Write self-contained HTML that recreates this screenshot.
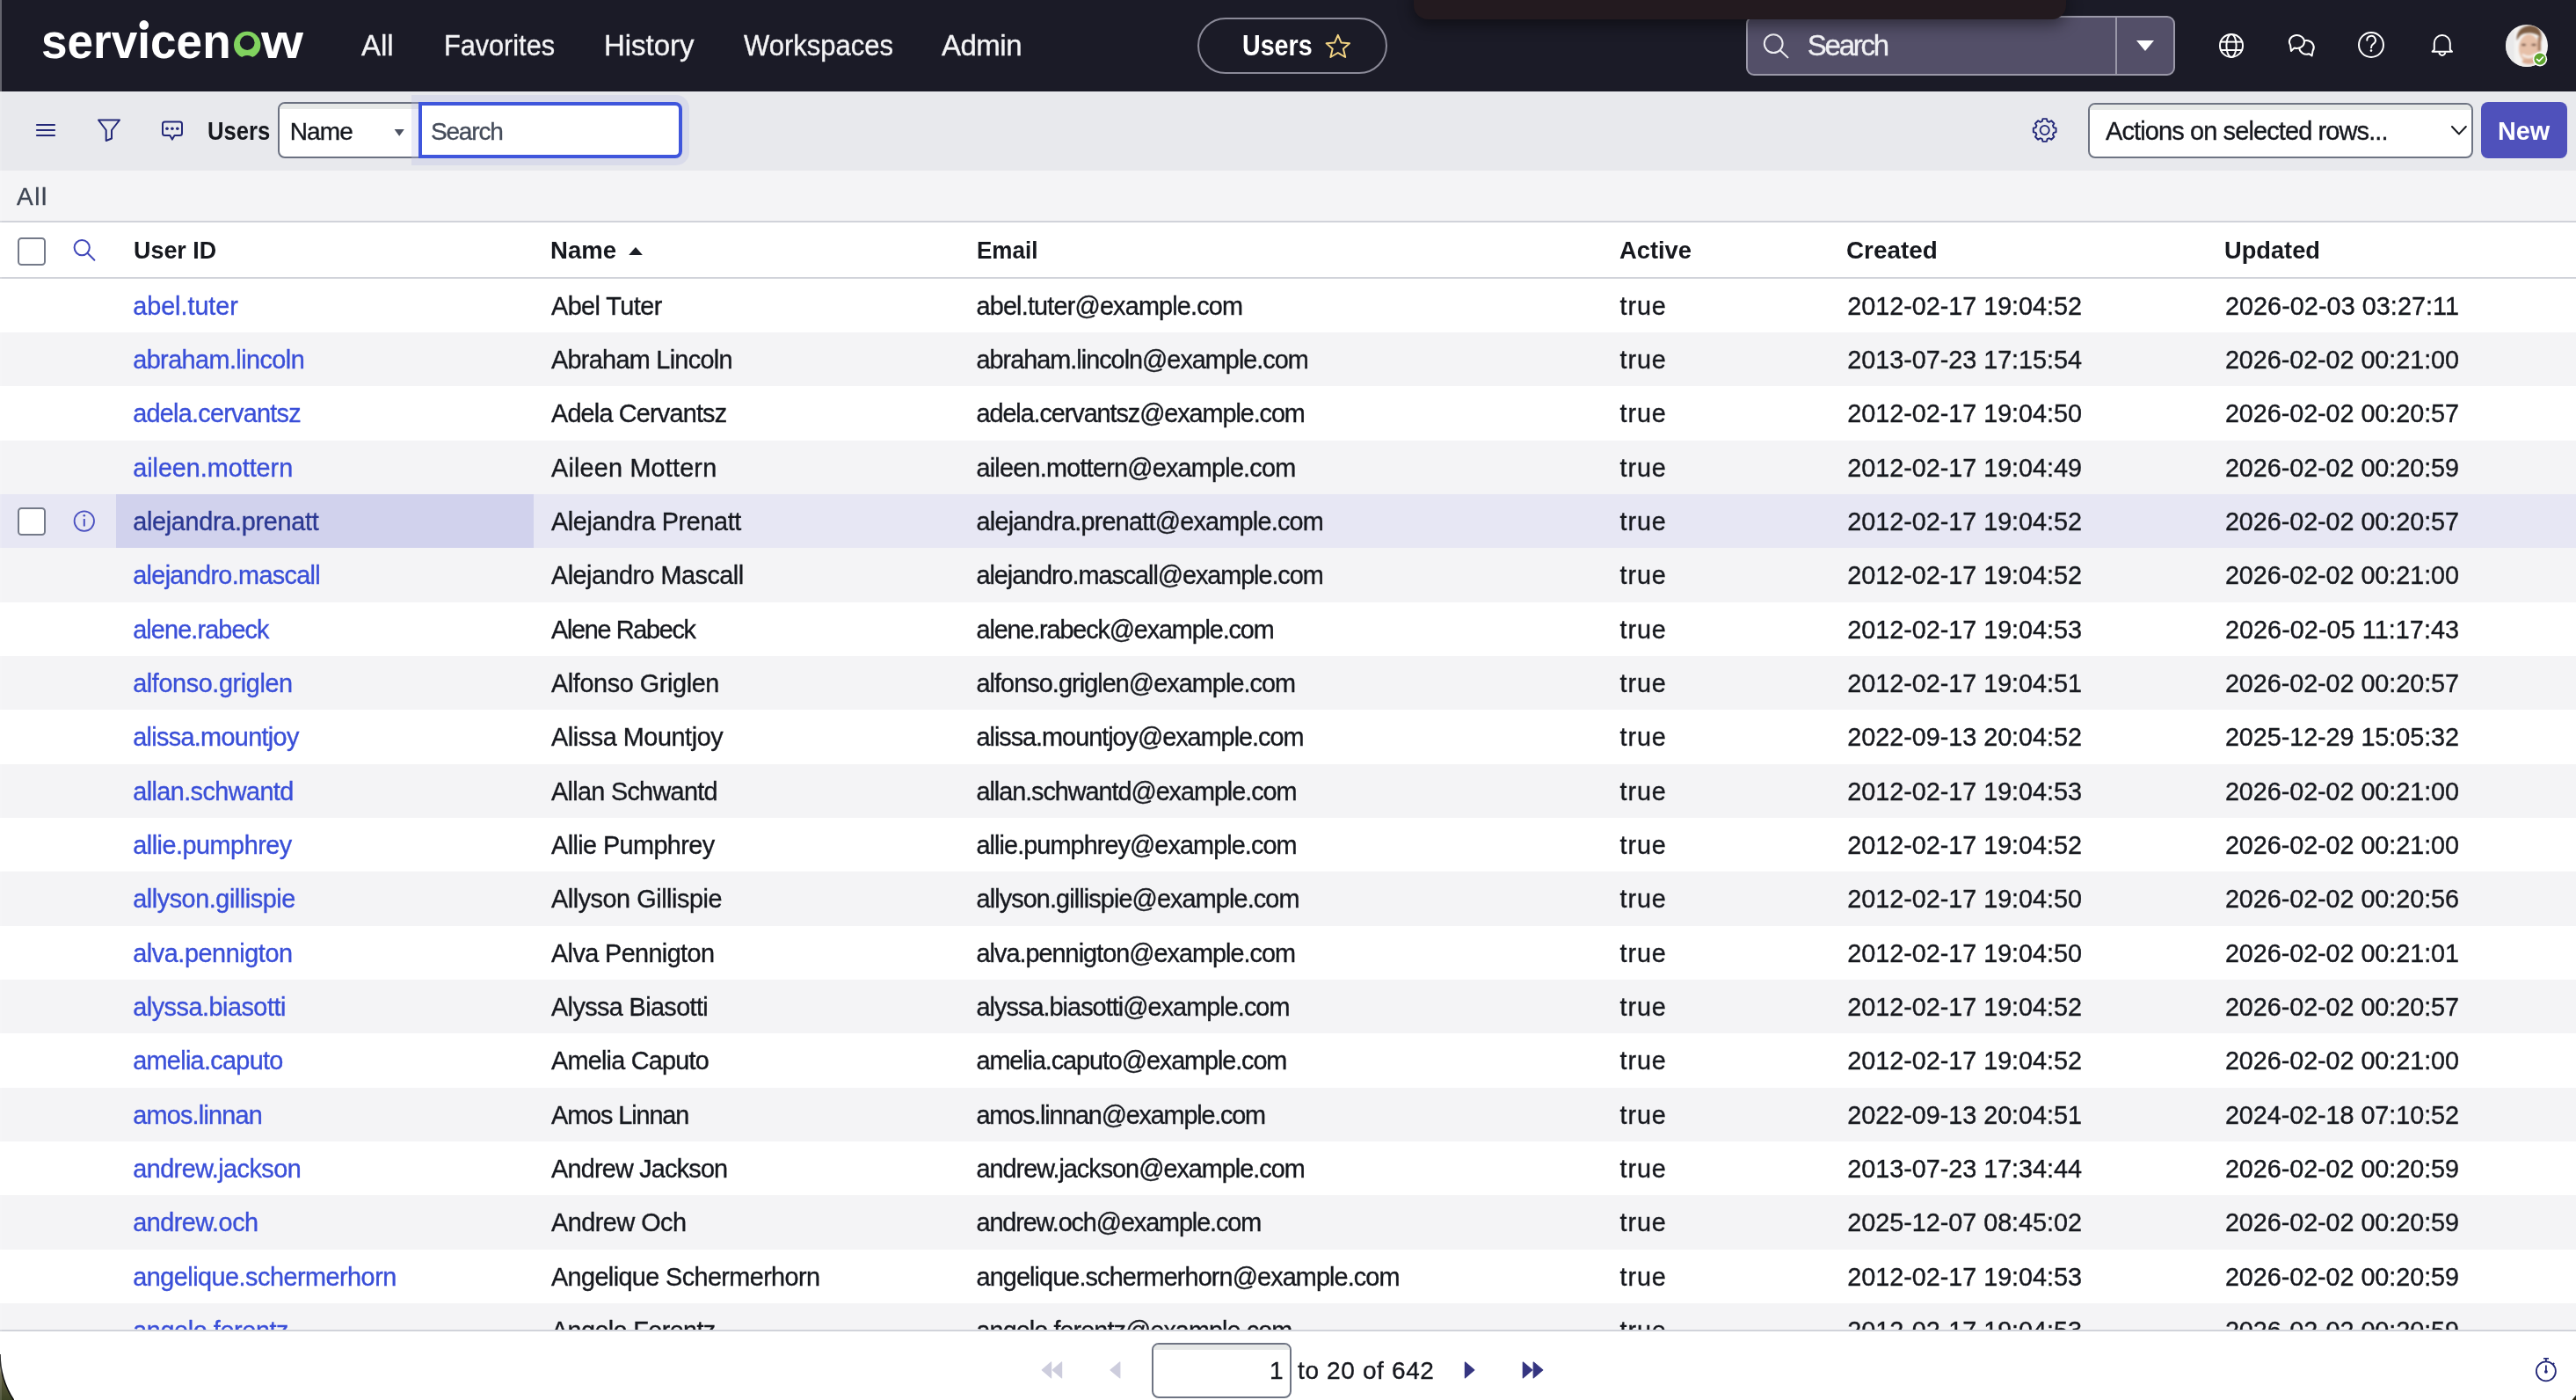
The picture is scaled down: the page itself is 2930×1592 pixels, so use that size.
<!DOCTYPE html>
<html><head><meta charset="utf-8"><style>
html,body{margin:0;padding:0;}
body{width:2930px;height:1592px;overflow:hidden;position:relative;background:#fff;font-family:'Liberation Sans', sans-serif;}
.t{position:absolute;white-space:pre;line-height:normal;-webkit-text-stroke:0.35px currentColor;}
.row{position:absolute;left:0;width:2930px;height:61.33px;}
.abs{position:absolute;}
svg{position:absolute;overflow:visible;}
</style></head><body>

<div class="abs" style="left:0;top:0;width:2930px;height:104px;background:#1b1b27"></div>
<div class="abs" style="left:0;top:104px;width:2930px;height:90px;background:#e8e9ed"></div>
<div class="abs" style="left:0;top:194px;width:2930px;height:57px;background:#f4f4f6"></div>
<div class="abs" style="left:0;top:251px;width:2930px;height:2px;background:#d1d3da"></div>
<div class="abs" style="left:0;top:315px;width:2930px;height:2px;background:#d1d3da"></div>

<div class="row" style="top:316.80px;background:#ffffff"></div><div class="row" style="top:378.13px;background:#f4f4f6"></div><div class="row" style="top:439.46px;background:#ffffff"></div><div class="row" style="top:500.79px;background:#f4f4f6"></div><div class="row" style="top:562.12px;background:#e7e7f4"></div><div style="position:absolute;left:132px;top:562.12px;width:475px;height:61.33px;background:#d1d2ed"></div><div class="row" style="top:623.45px;background:#f4f4f6"></div><div class="row" style="top:684.78px;background:#ffffff"></div><div class="row" style="top:746.11px;background:#f4f4f6"></div><div class="row" style="top:807.44px;background:#ffffff"></div><div class="row" style="top:868.77px;background:#f4f4f6"></div><div class="row" style="top:930.10px;background:#ffffff"></div><div class="row" style="top:991.43px;background:#f4f4f6"></div><div class="row" style="top:1052.76px;background:#ffffff"></div><div class="row" style="top:1114.09px;background:#f4f4f6"></div><div class="row" style="top:1175.42px;background:#ffffff"></div><div class="row" style="top:1236.75px;background:#f4f4f6"></div><div class="row" style="top:1298.08px;background:#ffffff"></div><div class="row" style="top:1359.41px;background:#f4f4f6"></div><div class="row" style="top:1420.74px;background:#ffffff"></div><div class="row" style="top:1482.07px;background:#f4f4f6"></div>

<!-- left window edge -->
<div class="abs" style="left:0;top:0;width:2px;height:104px;background:#4b4b55"></div>
<!-- logo -->
<svg style="left:0;top:0" width="1" height="1"><circle cx="281.2" cy="51" r="15.2" fill="#81d35f"/><circle cx="281.2" cy="48.6" r="8.4" fill="#1b1b27"/><path d="M271.5,68 Q281.2,57.8 290.9,68 Z" fill="#1b1b27"/></svg>
<div class="abs" style="left:0;top:0;width:2px;height:1592px;background:rgba(255,255,255,0.14);z-index:9"></div>
<!-- pill -->
<div class="abs" style="left:1362px;top:20px;width:216px;height:64px;box-sizing:border-box;border:2px solid #8b8a98;border-radius:32px"></div>
<svg style="left:0;top:0" width="1" height="1"><path d="M1521.8,39.9 L1525.6,48.6 L1535,49.3 L1527.9,55.5 L1530.2,65 L1521.8,60 L1513.4,65 L1515.7,55.5 L1508.6,49.3 L1518,48.6 Z" fill="none" stroke="#f2d383" stroke-width="2" stroke-linejoin="round"/></svg>
<!-- overlay -->
<div class="abs" style="left:1608px;top:-20px;width:742px;height:41.6px;background:#231a1f;border-radius:16px;box-shadow:0 6px 18px rgba(0,0,0,0.45);z-index:2"></div>
<!-- header search -->
<div class="abs" style="left:1986px;top:18px;width:488px;height:68px;box-sizing:border-box;background:#534f68;border:2px solid #9a98a8;border-radius:9px"></div>
<div class="abs" style="left:2406px;top:18px;width:2px;height:68px;background:#9a98a8"></div>
<svg style="left:0;top:0" width="1" height="1">
 <circle cx="2017.2" cy="49.6" r="10.4" fill="none" stroke="#eeeef2" stroke-width="2"/>
 <line x1="2024.8" y1="57.2" x2="2033.4" y2="65.4" stroke="#eeeef2" stroke-width="2" stroke-linecap="round"/>
 <path d="M2430,46 L2450,46 L2440,58 Z" fill="#ffffff"/>
 <!-- globe -->
 <g fill="none" stroke="#ffffff" stroke-width="2">
  <circle cx="2538" cy="51.9" r="13"/>
  <ellipse cx="2538" cy="51.9" rx="5.6" ry="13"/>
  <line x1="2525" y1="47.6" x2="2551" y2="47.6"/>
  <line x1="2525" y1="57" x2="2551" y2="57"/>
 </g>
 <!-- chat -->
 <g fill="none" stroke="#ffffff" stroke-width="2" stroke-linejoin="round">
  <path d="M2630.6,57.8 A8.3,7.8 0 1 0 2626.2,61.2 L2629.6,63.4 Z"/>
  <path d="M2609.6,54.55 A8.5,7.5 0 1 0 2605.1,51.25 L2606,57.9 Z" fill="#1b1b27"/>
 </g>
 <!-- help -->
 <g fill="none" stroke="#ffffff" stroke-width="2">
  <circle cx="2697" cy="51" r="14"/>
  <path d="M2692.3,45.8 A4.8,4.8 0 1 1 2699.5,49.8 C2697.6,51 2697,52 2697,54.2" stroke-linecap="round"/>
 </g>
 <circle cx="2697" cy="57.6" r="1.3" fill="#fff"/>
 <!-- bell -->
 <g fill="none" stroke="#ffffff" stroke-width="2" stroke-linejoin="round">
  <path d="M2768.8,56.5 L2768.8,49 A9,9 0 0 1 2786.8,49 L2786.8,56.5 L2789,58.8 L2766.6,58.8 Z"/>
  <path d="M2774.4,59.5 A3.4,3.4 0 0 0 2781.2,59.5"/>
 </g>
</svg>
<!-- avatar -->
<svg style="left:0;top:0" width="1" height="1">
 <defs>
  <clipPath id="avc"><circle cx="2874" cy="52" r="24"/></clipPath>
  <filter id="blr" x="-50%" y="-50%" width="200%" height="200%"><feGaussianBlur stdDeviation="1.1"/></filter>
 </defs>
 <circle cx="2874" cy="52" r="24" fill="#f4f3f2"/>
 <g clip-path="url(#avc)" filter="url(#blr)">
  <rect x="2850" y="28" width="10" height="50" fill="#e9e9ea"/>
  <ellipse cx="2876.5" cy="55" rx="11.5" ry="16" fill="#e6c0a8"/>
  <path d="M2862.5,46 C2862,33 2872,28.8 2879,29 C2887,29.5 2892,35 2890.5,47 L2888,41 C2884,36.5 2870,36 2866,41 Z" fill="#7b5b42"/>
  <rect x="2886.5" y="42" width="3.5" height="16" fill="#a98066"/>
  <ellipse cx="2870.5" cy="51" rx="2.8" ry="1.2" fill="#6a4a3c"/>
  <ellipse cx="2882" cy="51" rx="2.8" ry="1.2" fill="#6a4a3c"/>
  <path d="M2869,62 Q2876.5,68 2884,61.5" fill="none" stroke="#f6efea" stroke-width="2.6"/>
  <ellipse cx="2876.5" cy="70" rx="8" ry="3" fill="#d9ab92"/>
  <rect x="2862" y="73" width="30" height="8" fill="#f0ece9"/>
 </g>
 <circle cx="2889" cy="67.2" r="8.2" fill="#ffffff"/>
 <circle cx="2889" cy="67.2" r="6.6" fill="#5ea52e"/>
 <path d="M2885.6,67.4 L2888,69.6 L2892.4,65" fill="none" stroke="#fff" stroke-width="1.8" stroke-linecap="round" stroke-linejoin="round"/>
</svg>

<!-- toolbar icons -->
<svg style="left:0;top:0" width="1" height="1">
 <g stroke="#232878" stroke-width="2.2" stroke-linecap="round">
  <line x1="42" y1="142" x2="62" y2="142"/><line x1="42" y1="148" x2="62" y2="148"/><line x1="42" y1="154" x2="62" y2="154"/>
 </g>
 <path d="M112,136.5 L136,136.5 L127,148 L127,157.5 L120.7,160 L120.7,148 Z" fill="none" stroke="#232878" stroke-width="2" stroke-linejoin="round"/>
 <path d="M187.5,138.5 L204.5,138.5 A2.5,2.5 0 0 1 207,141 L207,151.5 A2.5,2.5 0 0 1 204.5,154 L198.5,154 L195.9,158.6 L193.3,154 L187.5,154 A2.5,2.5 0 0 1 185,151.5 L185,141 A2.5,2.5 0 0 1 187.5,138.5 Z" fill="none" stroke="#232878" stroke-width="2" stroke-linejoin="round"/>
 <circle cx="190" cy="146.2" r="1.8" fill="#232878"/><circle cx="195.9" cy="146.2" r="1.8" fill="#232878"/><circle cx="201.8" cy="146.2" r="1.8" fill="#232878"/>
 <path d="M2322.86,137.79 L2323.40,135.10 L2328.00,135.10 L2328.54,137.79 L2330.92,138.77 L2333.19,137.25 L2336.45,140.51 L2334.93,142.78 L2335.91,145.16 L2338.60,145.70 L2338.60,150.30 L2335.91,150.84 L2334.93,153.22 L2336.45,155.49 L2333.19,158.75 L2330.92,157.23 L2328.54,158.21 L2328.00,160.90 L2323.40,160.90 L2322.86,158.21 L2320.48,157.23 L2318.21,158.75 L2314.95,155.49 L2316.47,153.22 L2315.49,150.84 L2312.80,150.30 L2312.80,145.70 L2315.49,145.16 L2316.47,142.78 L2314.95,140.51 L2318.21,137.25 L2320.48,138.77 Z" fill="none" stroke="#232878" stroke-width="1.9" stroke-linejoin="round"/>
 <circle cx="2325.7" cy="148" r="5.1" fill="none" stroke="#232878" stroke-width="1.9"/>
</svg>
<!-- Name select -->
<div class="abs" style="left:316px;top:116px;width:170px;height:64px;box-sizing:border-box;border:2px solid #6b7181;border-radius:8px 0 0 8px;background:#fff;overflow:hidden"><div style="height:6px;background:#e6e8e7"></div></div>
<svg style="left:0;top:0" width="1" height="1"><path d="M448.6,147 L459.8,147 L454.2,154.7 Z" fill="#4c5262"/></svg>
<!-- search halo + input -->
<div class="abs" style="left:468px;top:108px;width:316px;height:80px;background:rgba(183,187,228,0.31);border-radius:0 15px 15px 0"></div>
<div class="abs" style="left:476px;top:116px;width:300px;height:64px;box-sizing:border-box;border:4px solid #3f56dc;border-radius:0 8px 8px 0;background:#fff"></div>
<!-- actions select -->
<div class="abs" style="left:2374.6px;top:116.7px;width:438.6px;height:63px;box-sizing:border-box;border:2px solid #6e7483;border-radius:8px;background:#fff;overflow:hidden"><div style="height:6px;background:#e6e8e7"></div></div>
<svg style="left:0;top:0" width="1" height="1"><path d="M2789,144 L2796.9,152.4 L2804.8,144" fill="none" stroke="#16181e" stroke-width="2" stroke-linecap="round" stroke-linejoin="round"/></svg>
<!-- New button -->
<div class="abs" style="left:2822px;top:116px;width:98px;height:64px;background:#4f51bb;border-radius:8px"></div>

<!-- column header icons -->
<div class="abs" style="left:20px;top:270px;width:32px;height:32px;box-sizing:border-box;border:2px solid #747a89;border-radius:4.5px;background:#fff"></div>
<svg style="left:0;top:0" width="1" height="1">
 <circle cx="93.2" cy="281.6" r="8.6" fill="none" stroke="#4148b9" stroke-width="2"/>
 <line x1="99.4" y1="287.8" x2="107.4" y2="295.8" stroke="#4148b9" stroke-width="2" stroke-linecap="round"/>
 <path d="M715.2,289.9 L730.9,289.9 L723,281 Z" fill="#1d2027"/>
</svg>
<!-- hovered row checkbox + info -->
<div class="abs" style="left:20px;top:577.4px;width:32px;height:32px;box-sizing:border-box;border:2px solid #747a89;border-radius:4.5px;background:#fff"></div>
<svg style="left:0;top:0" width="1" height="1">
 <circle cx="95.8" cy="592.6" r="11.2" fill="none" stroke="#4a50c0" stroke-width="1.8"/>
 <line x1="95.8" y1="590" x2="95.8" y2="598.5" stroke="#4a50c0" stroke-width="2"/>
 <circle cx="95.8" cy="586.2" r="1.3" fill="#4a50c0"/>
</svg>

<div class="abs" style="left:0;top:0;width:2930px;height:1592px;z-index:3;will-change:transform"><span class="t" style="left:411.0px;top:33.1px;font-size:33px;color:#f4f4f6;letter-spacing:-0.09px;">All</span><span class="t" style="left:504.6px;top:33.1px;font-size:33px;color:#f4f4f6;transform:scaleX(0.9284);transform-origin:0 0;">Favorites</span><span class="t" style="left:687.0px;top:33.1px;font-size:33px;color:#f4f4f6;letter-spacing:-0.03px;">History</span><span class="t" style="left:845.6px;top:33.1px;font-size:33px;color:#f4f4f6;transform:scaleX(0.9395);transform-origin:0 0;">Workspaces</span><span class="t" style="left:1071.0px;top:33.1px;font-size:33px;color:#f4f4f6;letter-spacing:-0.51px;">Admin</span><span class="t" style="left:1412.6px;top:33.3px;font-size:33px;color:#ffffff;font-weight:700;-webkit-text-stroke:0;transform:scaleX(0.8677);transform-origin:0 0;">Users</span><span class="t" style="left:2055.7px;top:32.9px;font-size:33px;color:#efeff3;letter-spacing:-2.21px;">Search</span><span class="t" style="left:235.9px;top:132.8px;font-size:29px;color:#16181e;font-weight:700;-webkit-text-stroke:0;transform:scaleX(0.8843);transform-origin:0 0;">Users</span><span class="t" style="left:329.8px;top:133.7px;font-size:28px;color:#16181e;letter-spacing:-0.90px;">Name</span><span class="t" style="left:489.9px;top:133.7px;font-size:28px;color:#454c5a;letter-spacing:-1.14px;">Search</span><span class="t" style="left:2395.0px;top:133.1px;font-size:29px;color:#16181e;letter-spacing:-0.90px;">Actions on selected rows...</span><span class="t" style="left:2841.2px;top:133.1px;font-size:29px;color:#ffffff;font-weight:700;-webkit-text-stroke:0;transform:scaleX(0.9943);transform-origin:0 0;">New</span><span class="t" style="left:19.0px;top:208.2px;font-size:28px;color:#3e4553;letter-spacing:1.59px;">All</span><span class="t" style="left:152.2px;top:269.4px;font-size:28px;color:#16181e;font-weight:700;-webkit-text-stroke:0;transform:scaleX(0.9608);transform-origin:0 0;">User ID</span><span class="t" style="left:626.4px;top:269.4px;font-size:28px;color:#16181e;font-weight:700;-webkit-text-stroke:0;transform:scaleX(0.9834);transform-origin:0 0;">Name</span><span class="t" style="left:1111.0px;top:269.4px;font-size:28px;color:#16181e;font-weight:700;-webkit-text-stroke:0;transform:scaleX(0.9303);transform-origin:0 0;">Email</span><span class="t" style="left:1841.6px;top:269.4px;font-size:28px;color:#16181e;font-weight:700;-webkit-text-stroke:0;transform:scaleX(0.9756);transform-origin:0 0;">Active</span><span class="t" style="left:2099.8px;top:269.4px;font-size:28px;color:#16181e;font-weight:700;-webkit-text-stroke:0;transform:scaleX(0.9946);transform-origin:0 0;">Created</span><span class="t" style="left:2529.8px;top:269.4px;font-size:28px;color:#16181e;font-weight:700;-webkit-text-stroke:0;transform:scaleX(0.9723);transform-origin:0 0;">Updated</span><span class="t" style="left:151.2px;top:331.6px;font-size:28.8px;color:#3a4fd8;letter-spacing:-0.04px;">abel.tuter</span><span class="t" style="left:627.0px;top:331.6px;font-size:28.8px;color:#16181e;letter-spacing:-0.55px;">Abel Tuter</span><span class="t" style="left:1110.5px;top:331.6px;font-size:28.8px;color:#16181e;letter-spacing:-0.81px;">abel.tuter@example.com</span><span class="t" style="left:1842.5px;top:331.6px;font-size:28.8px;color:#16181e;letter-spacing:0.92px;">true</span><span class="t" style="left:2101.3px;top:331.6px;font-size:28.8px;color:#16181e;letter-spacing:-0.04px;">2012-02-17 19:04:52</span><span class="t" style="left:2530.9px;top:331.6px;font-size:28.8px;color:#16181e;letter-spacing:0.05px;">2026-02-03 03:27:11</span><span class="t" style="left:151.2px;top:393.0px;font-size:28.8px;color:#3a4fd8;letter-spacing:-0.56px;">abraham.lincoln</span><span class="t" style="left:627.0px;top:393.0px;font-size:28.8px;color:#16181e;letter-spacing:-0.69px;">Abraham Lincoln</span><span class="t" style="left:1110.5px;top:393.0px;font-size:28.8px;color:#16181e;letter-spacing:-0.98px;">abraham.lincoln@example.com</span><span class="t" style="left:1842.5px;top:393.0px;font-size:28.8px;color:#16181e;letter-spacing:0.92px;">true</span><span class="t" style="left:2101.3px;top:393.0px;font-size:28.8px;color:#16181e;letter-spacing:-0.04px;">2013-07-23 17:15:54</span><span class="t" style="left:2530.9px;top:393.0px;font-size:28.8px;color:#16181e;letter-spacing:-0.07px;">2026-02-02 00:21:00</span><span class="t" style="left:151.2px;top:454.3px;font-size:28.8px;color:#3a4fd8;letter-spacing:-0.73px;">adela.cervantsz</span><span class="t" style="left:627.0px;top:454.3px;font-size:28.8px;color:#16181e;letter-spacing:-0.80px;">Adela Cervantsz</span><span class="t" style="left:1110.5px;top:454.3px;font-size:28.8px;color:#16181e;letter-spacing:-1.07px;">adela.cervantsz@example.com</span><span class="t" style="left:1842.5px;top:454.3px;font-size:28.8px;color:#16181e;letter-spacing:0.92px;">true</span><span class="t" style="left:2101.3px;top:454.3px;font-size:28.8px;color:#16181e;letter-spacing:-0.04px;">2012-02-17 19:04:50</span><span class="t" style="left:2530.9px;top:454.3px;font-size:28.8px;color:#16181e;letter-spacing:-0.07px;">2026-02-02 00:20:57</span><span class="t" style="left:151.2px;top:515.6px;font-size:28.8px;color:#3a4fd8;letter-spacing:-0.04px;">aileen.mottern</span><span class="t" style="left:627.0px;top:515.6px;font-size:28.8px;color:#16181e;letter-spacing:0.19px;">Aileen Mottern</span><span class="t" style="left:1110.5px;top:515.6px;font-size:28.8px;color:#16181e;letter-spacing:-0.77px;">aileen.mottern@example.com</span><span class="t" style="left:1842.5px;top:515.6px;font-size:28.8px;color:#16181e;letter-spacing:0.92px;">true</span><span class="t" style="left:2101.3px;top:515.6px;font-size:28.8px;color:#16181e;letter-spacing:-0.04px;">2012-02-17 19:04:49</span><span class="t" style="left:2530.9px;top:515.6px;font-size:28.8px;color:#16181e;letter-spacing:-0.07px;">2026-02-02 00:20:59</span><span class="t" style="left:151.2px;top:577.0px;font-size:28.8px;color:#2b3892;letter-spacing:-0.29px;">alejandra.prenatt</span><span class="t" style="left:627.0px;top:577.0px;font-size:28.8px;color:#16181e;letter-spacing:-0.39px;">Alejandra Prenatt</span><span class="t" style="left:1110.5px;top:577.0px;font-size:28.8px;color:#16181e;letter-spacing:-0.76px;">alejandra.prenatt@example.com</span><span class="t" style="left:1842.5px;top:577.0px;font-size:28.8px;color:#16181e;letter-spacing:0.92px;">true</span><span class="t" style="left:2101.3px;top:577.0px;font-size:28.8px;color:#16181e;letter-spacing:-0.04px;">2012-02-17 19:04:52</span><span class="t" style="left:2530.9px;top:577.0px;font-size:28.8px;color:#16181e;letter-spacing:-0.07px;">2026-02-02 00:20:57</span><span class="t" style="left:151.2px;top:638.3px;font-size:28.8px;color:#3a4fd8;letter-spacing:-0.66px;">alejandro.mascall</span><span class="t" style="left:627.0px;top:638.3px;font-size:28.8px;color:#16181e;letter-spacing:-0.51px;">Alejandro Mascall</span><span class="t" style="left:1110.5px;top:638.3px;font-size:28.8px;color:#16181e;letter-spacing:-1.05px;">alejandro.mascall@example.com</span><span class="t" style="left:1842.5px;top:638.3px;font-size:28.8px;color:#16181e;letter-spacing:0.92px;">true</span><span class="t" style="left:2101.3px;top:638.3px;font-size:28.8px;color:#16181e;letter-spacing:-0.04px;">2012-02-17 19:04:52</span><span class="t" style="left:2530.9px;top:638.3px;font-size:28.8px;color:#16181e;letter-spacing:-0.07px;">2026-02-02 00:21:00</span><span class="t" style="left:151.2px;top:699.6px;font-size:28.8px;color:#3a4fd8;letter-spacing:-0.87px;">alene.rabeck</span><span class="t" style="left:627.0px;top:699.6px;font-size:28.8px;color:#16181e;letter-spacing:-1.31px;">Alene Rabeck</span><span class="t" style="left:1110.5px;top:699.6px;font-size:28.8px;color:#16181e;letter-spacing:-1.14px;">alene.rabeck@example.com</span><span class="t" style="left:1842.5px;top:699.6px;font-size:28.8px;color:#16181e;letter-spacing:0.92px;">true</span><span class="t" style="left:2101.3px;top:699.6px;font-size:28.8px;color:#16181e;letter-spacing:-0.04px;">2012-02-17 19:04:53</span><span class="t" style="left:2530.9px;top:699.6px;font-size:28.8px;color:#16181e;letter-spacing:0.05px;">2026-02-05 11:17:43</span><span class="t" style="left:151.2px;top:760.9px;font-size:28.8px;color:#3a4fd8;letter-spacing:-0.39px;">alfonso.griglen</span><span class="t" style="left:627.0px;top:760.9px;font-size:28.8px;color:#16181e;letter-spacing:-0.40px;">Alfonso Griglen</span><span class="t" style="left:1110.5px;top:760.9px;font-size:28.8px;color:#16181e;letter-spacing:-0.93px;">alfonso.griglen@example.com</span><span class="t" style="left:1842.5px;top:760.9px;font-size:28.8px;color:#16181e;letter-spacing:0.92px;">true</span><span class="t" style="left:2101.3px;top:760.9px;font-size:28.8px;color:#16181e;letter-spacing:-0.04px;">2012-02-17 19:04:51</span><span class="t" style="left:2530.9px;top:760.9px;font-size:28.8px;color:#16181e;letter-spacing:-0.07px;">2026-02-02 00:20:57</span><span class="t" style="left:151.2px;top:822.3px;font-size:28.8px;color:#3a4fd8;letter-spacing:-0.67px;">alissa.mountjoy</span><span class="t" style="left:627.0px;top:822.3px;font-size:28.8px;color:#16181e;letter-spacing:-0.43px;">Alissa Mountjoy</span><span class="t" style="left:1110.5px;top:822.3px;font-size:28.8px;color:#16181e;letter-spacing:-1.00px;">alissa.mountjoy@example.com</span><span class="t" style="left:1842.5px;top:822.3px;font-size:28.8px;color:#16181e;letter-spacing:0.92px;">true</span><span class="t" style="left:2101.3px;top:822.3px;font-size:28.8px;color:#16181e;letter-spacing:-0.04px;">2022-09-13 20:04:52</span><span class="t" style="left:2530.9px;top:822.3px;font-size:28.8px;color:#16181e;letter-spacing:-0.07px;">2025-12-29 15:05:32</span><span class="t" style="left:151.2px;top:883.6px;font-size:28.8px;color:#3a4fd8;letter-spacing:-0.57px;">allan.schwantd</span><span class="t" style="left:627.0px;top:883.6px;font-size:28.8px;color:#16181e;letter-spacing:-0.69px;">Allan Schwantd</span><span class="t" style="left:1110.5px;top:883.6px;font-size:28.8px;color:#16181e;letter-spacing:-1.04px;">allan.schwantd@example.com</span><span class="t" style="left:1842.5px;top:883.6px;font-size:28.8px;color:#16181e;letter-spacing:0.92px;">true</span><span class="t" style="left:2101.3px;top:883.6px;font-size:28.8px;color:#16181e;letter-spacing:-0.04px;">2012-02-17 19:04:53</span><span class="t" style="left:2530.9px;top:883.6px;font-size:28.8px;color:#16181e;letter-spacing:-0.07px;">2026-02-02 00:21:00</span><span class="t" style="left:151.2px;top:944.9px;font-size:28.8px;color:#3a4fd8;letter-spacing:-0.48px;">allie.pumphrey</span><span class="t" style="left:627.0px;top:944.9px;font-size:28.8px;color:#16181e;letter-spacing:-0.58px;">Allie Pumphrey</span><span class="t" style="left:1110.5px;top:944.9px;font-size:28.8px;color:#16181e;letter-spacing:-0.91px;">allie.pumphrey@example.com</span><span class="t" style="left:1842.5px;top:944.9px;font-size:28.8px;color:#16181e;letter-spacing:0.92px;">true</span><span class="t" style="left:2101.3px;top:944.9px;font-size:28.8px;color:#16181e;letter-spacing:-0.04px;">2012-02-17 19:04:52</span><span class="t" style="left:2530.9px;top:944.9px;font-size:28.8px;color:#16181e;letter-spacing:-0.07px;">2026-02-02 00:21:00</span><span class="t" style="left:151.2px;top:1006.3px;font-size:28.8px;color:#3a4fd8;letter-spacing:-0.44px;">allyson.gillispie</span><span class="t" style="left:627.0px;top:1006.3px;font-size:28.8px;color:#16181e;letter-spacing:-0.45px;">Allyson Gillispie</span><span class="t" style="left:1110.5px;top:1006.3px;font-size:28.8px;color:#16181e;letter-spacing:-0.88px;">allyson.gillispie@example.com</span><span class="t" style="left:1842.5px;top:1006.3px;font-size:28.8px;color:#16181e;letter-spacing:0.92px;">true</span><span class="t" style="left:2101.3px;top:1006.3px;font-size:28.8px;color:#16181e;letter-spacing:-0.04px;">2012-02-17 19:04:50</span><span class="t" style="left:2530.9px;top:1006.3px;font-size:28.8px;color:#16181e;letter-spacing:-0.07px;">2026-02-02 00:20:56</span><span class="t" style="left:151.2px;top:1067.6px;font-size:28.8px;color:#3a4fd8;letter-spacing:-0.42px;">alva.pennigton</span><span class="t" style="left:627.0px;top:1067.6px;font-size:28.8px;color:#16181e;letter-spacing:-0.60px;">Alva Pennigton</span><span class="t" style="left:1110.5px;top:1067.6px;font-size:28.8px;color:#16181e;letter-spacing:-0.97px;">alva.pennigton@example.com</span><span class="t" style="left:1842.5px;top:1067.6px;font-size:28.8px;color:#16181e;letter-spacing:0.92px;">true</span><span class="t" style="left:2101.3px;top:1067.6px;font-size:28.8px;color:#16181e;letter-spacing:-0.04px;">2012-02-17 19:04:50</span><span class="t" style="left:2530.9px;top:1067.6px;font-size:28.8px;color:#16181e;letter-spacing:-0.07px;">2026-02-02 00:21:01</span><span class="t" style="left:151.2px;top:1128.9px;font-size:28.8px;color:#3a4fd8;letter-spacing:-0.48px;">alyssa.biasotti</span><span class="t" style="left:627.0px;top:1128.9px;font-size:28.8px;color:#16181e;letter-spacing:-0.61px;">Alyssa Biasotti</span><span class="t" style="left:1110.5px;top:1128.9px;font-size:28.8px;color:#16181e;letter-spacing:-0.94px;">alyssa.biasotti@example.com</span><span class="t" style="left:1842.5px;top:1128.9px;font-size:28.8px;color:#16181e;letter-spacing:0.92px;">true</span><span class="t" style="left:2101.3px;top:1128.9px;font-size:28.8px;color:#16181e;letter-spacing:-0.04px;">2012-02-17 19:04:52</span><span class="t" style="left:2530.9px;top:1128.9px;font-size:28.8px;color:#16181e;letter-spacing:-0.07px;">2026-02-02 00:20:57</span><span class="t" style="left:151.2px;top:1190.3px;font-size:28.8px;color:#3a4fd8;letter-spacing:-0.68px;">amelia.caputo</span><span class="t" style="left:627.0px;top:1190.3px;font-size:28.8px;color:#16181e;letter-spacing:-0.77px;">Amelia Caputo</span><span class="t" style="left:1110.5px;top:1190.3px;font-size:28.8px;color:#16181e;letter-spacing:-1.08px;">amelia.caputo@example.com</span><span class="t" style="left:1842.5px;top:1190.3px;font-size:28.8px;color:#16181e;letter-spacing:0.92px;">true</span><span class="t" style="left:2101.3px;top:1190.3px;font-size:28.8px;color:#16181e;letter-spacing:-0.04px;">2012-02-17 19:04:52</span><span class="t" style="left:2530.9px;top:1190.3px;font-size:28.8px;color:#16181e;letter-spacing:-0.07px;">2026-02-02 00:21:00</span><span class="t" style="left:151.2px;top:1251.6px;font-size:28.8px;color:#3a4fd8;letter-spacing:-0.76px;">amos.linnan</span><span class="t" style="left:627.0px;top:1251.6px;font-size:28.8px;color:#16181e;letter-spacing:-1.08px;">Amos Linnan</span><span class="t" style="left:1110.5px;top:1251.6px;font-size:28.8px;color:#16181e;letter-spacing:-1.19px;">amos.linnan@example.com</span><span class="t" style="left:1842.5px;top:1251.6px;font-size:28.8px;color:#16181e;letter-spacing:0.92px;">true</span><span class="t" style="left:2101.3px;top:1251.6px;font-size:28.8px;color:#16181e;letter-spacing:-0.04px;">2022-09-13 20:04:51</span><span class="t" style="left:2530.9px;top:1251.6px;font-size:28.8px;color:#16181e;letter-spacing:-0.07px;">2024-02-18 07:10:52</span><span class="t" style="left:151.2px;top:1312.9px;font-size:28.8px;color:#3a4fd8;letter-spacing:-0.54px;">andrew.jackson</span><span class="t" style="left:627.0px;top:1312.9px;font-size:28.8px;color:#16181e;letter-spacing:-0.78px;">Andrew Jackson</span><span class="t" style="left:1110.5px;top:1312.9px;font-size:28.8px;color:#16181e;letter-spacing:-0.99px;">andrew.jackson@example.com</span><span class="t" style="left:1842.5px;top:1312.9px;font-size:28.8px;color:#16181e;letter-spacing:0.92px;">true</span><span class="t" style="left:2101.3px;top:1312.9px;font-size:28.8px;color:#16181e;letter-spacing:-0.04px;">2013-07-23 17:34:44</span><span class="t" style="left:2530.9px;top:1312.9px;font-size:28.8px;color:#16181e;letter-spacing:-0.07px;">2026-02-02 00:20:59</span><span class="t" style="left:151.2px;top:1374.2px;font-size:28.8px;color:#3a4fd8;letter-spacing:-0.49px;">andrew.och</span><span class="t" style="left:627.0px;top:1374.2px;font-size:28.8px;color:#16181e;letter-spacing:-0.49px;">Andrew Och</span><span class="t" style="left:1110.5px;top:1374.2px;font-size:28.8px;color:#16181e;letter-spacing:-1.10px;">andrew.och@example.com</span><span class="t" style="left:1842.5px;top:1374.2px;font-size:28.8px;color:#16181e;letter-spacing:0.92px;">true</span><span class="t" style="left:2101.3px;top:1374.2px;font-size:28.8px;color:#16181e;letter-spacing:-0.04px;">2025-12-07 08:45:02</span><span class="t" style="left:2530.9px;top:1374.2px;font-size:28.8px;color:#16181e;letter-spacing:-0.07px;">2026-02-02 00:20:59</span><span class="t" style="left:151.2px;top:1435.6px;font-size:28.8px;color:#3a4fd8;letter-spacing:-0.50px;">angelique.schermerhorn</span><span class="t" style="left:627.0px;top:1435.6px;font-size:28.8px;color:#16181e;letter-spacing:-0.60px;">Angelique Schermerhorn</span><span class="t" style="left:1110.5px;top:1435.6px;font-size:28.8px;color:#16181e;letter-spacing:-0.88px;">angelique.schermerhorn@example.com</span><span class="t" style="left:1842.5px;top:1435.6px;font-size:28.8px;color:#16181e;letter-spacing:0.92px;">true</span><span class="t" style="left:2101.3px;top:1435.6px;font-size:28.8px;color:#16181e;letter-spacing:-0.04px;">2012-02-17 19:04:53</span><span class="t" style="left:2530.9px;top:1435.6px;font-size:28.8px;color:#16181e;letter-spacing:-0.07px;">2026-02-02 00:20:59</span><span class="t" style="left:151.2px;top:1496.9px;font-size:28.8px;color:#3a4fd8;letter-spacing:-0.40px;">angelo.ferentz</span><span class="t" style="left:627.0px;top:1496.9px;font-size:28.8px;color:#16181e;letter-spacing:-0.62px;">Angelo Ferentz</span><span class="t" style="left:1110.5px;top:1496.9px;font-size:28.8px;color:#16181e;letter-spacing:-0.93px;">angelo.ferentz@example.com</span><span class="t" style="left:1842.5px;top:1496.9px;font-size:28.8px;color:#16181e;letter-spacing:0.92px;">true</span><span class="t" style="left:2101.3px;top:1496.9px;font-size:28.8px;color:#16181e;letter-spacing:-0.04px;">2012-02-17 19:04:53</span><span class="t" style="left:2530.9px;top:1496.9px;font-size:28.8px;color:#16181e;letter-spacing:-0.07px;">2026-02-02 00:20:59</span><span class="t" style="left:47.4px;top:13.9px;font-size:56px;color:#ffffff;font-weight:700;-webkit-text-stroke:0;transform:scaleX(0.9486);transform-origin:0 0;">servicen</span><span class="t" style="left:297.0px;top:13.9px;font-size:56px;color:#ffffff;font-weight:700;-webkit-text-stroke:0;transform:scaleX(1.1019);transform-origin:0 0;">w</span></div>
<div class="abs" style="left:0;top:0;width:2930px;height:1592px;z-index:4">
<div class="abs" style="left:0;top:1512px;width:2930px;height:2px;background:#d1d3da"></div>
<div class="abs" style="left:0;top:1514px;width:2930px;height:78px;background:#fff"></div>
</div>

<svg style="left:0;top:0;z-index:5" width="1" height="1">
 <rect x="157" y="24" width="13" height="10.5" fill="#1b1b27"/>
 <circle cx="163.8" cy="28.4" r="5.3" fill="#ffffff"/>
 <g fill="#cdcddd" stroke="#cdcddd" stroke-width="1.2" stroke-linejoin="round">
  <path d="M1185.2,1557.9 L1195.6,1549 L1195.6,1566.9 Z"/>
  <path d="M1197.2,1557.9 L1207.6,1549 L1207.6,1566.9 Z"/>
  <path d="M1262.9,1557.9 L1273.8,1549 L1273.8,1566.9 Z"/>
 </g>
 <g fill="#353580" stroke="#353580" stroke-width="1.2" stroke-linejoin="round">
  <path d="M1666.4,1549 L1676.9,1557.9 L1666.4,1566.9 Z"/>
  <path d="M1732.3,1549 L1742.8,1557.9 L1732.3,1566.9 Z"/>
  <path d="M1744.2,1549 L1754.8,1557.9 L1744.2,1566.9 Z"/>
 </g>
 <g fill="none" stroke="#232878" stroke-width="1.8">
  <circle cx="2895.9" cy="1559.3" r="11"/>
  <line x1="2893" y1="1544.8" x2="2899" y2="1544.8" stroke-width="1.6"/>
  <line x1="2895.9" y1="1545" x2="2895.9" y2="1548.3"/>
  <line x1="2895.9" y1="1552.6" x2="2895.9" y2="1559"/>
  <line x1="2903.6" y1="1551.6" x2="2905.2" y2="1550"/>
 </g>
 <circle cx="2895.9" cy="1559.8" r="1.9" fill="#232878"/>
 <defs><linearGradient id="dk" x1="0" y1="0" x2="0" y2="1"><stop offset="0" stop-color="#d8d4c4"/><stop offset="0.45" stop-color="#5d5a3c"/><stop offset="1" stop-color="#3b4224"/></linearGradient></defs>
 <path d="M0,1540 A95,95 0 0 0 15.5,1592 L0,1592 Z" fill="url(#dk)"/>
 <path d="M0,1540 A95,95 0 0 0 15.5,1592" fill="none" stroke="#0d0d0d" stroke-width="1.6"/>
 <path d="M2930,1586.5 L2925.5,1592 L2930,1592 Z" fill="#2a2a18"/>
</svg>
<div class="abs" style="left:1309.6px;top:1526.6px;width:159px;height:63px;box-sizing:border-box;border:2px solid #6e7483;border-radius:8px;background:#fff;overflow:hidden;z-index:5"><div style="height:6px;background:#e6e8e7"></div></div>

<div class="abs" style="left:0;top:0;width:2930px;height:1592px;z-index:6;will-change:transform"><span class="t" style="left:1476.0px;top:1543.2px;font-size:28px;color:#16181e;letter-spacing:0.64px;">to 20 of 642</span><span class="t" style="left:1444.0px;top:1543.2px;font-size:28px;color:#16181e;">1</span></div>
</body></html>
